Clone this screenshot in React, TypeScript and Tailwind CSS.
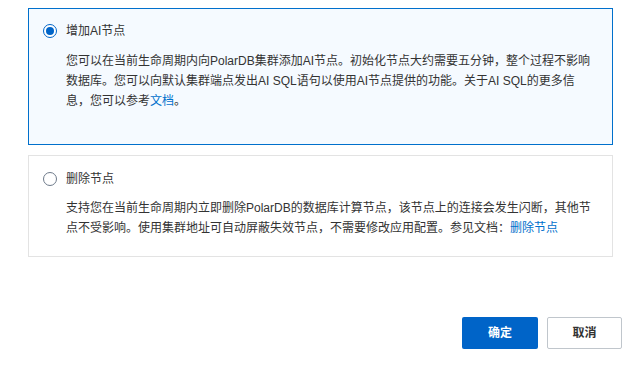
import React from "react";

const font = { fontFamily: '"Liberation Sans", "Noto Sans CJK SC", sans-serif' };

function Radio({ checked }: { checked: boolean }) {
  return checked ? (
    <span className="flex h-[14px] w-[14px] shrink-0 items-center justify-center rounded-full border border-[#0064c8] bg-white">
      <span className="h-[8px] w-[8px] rounded-full bg-[#0064c8]" />
    </span>
  ) : (
    <span className="h-[14px] w-[14px] shrink-0 rounded-full border border-[#6e7a8a] bg-white" />
  );
}

export default function App() {
  return (
    <div className="min-h-[371px] w-[643px] bg-white pt-2 pl-7 text-[12px] text-[#333]" style={font}>
      <div className="flex w-[585px] flex-col gap-[10px]">
        <div className="border border-[#0070cc] bg-[#f5faff] pt-3 pb-[33px] pl-[14px]">
          <div className="flex h-5 items-center gap-[9px]">
            <Radio checked />
            <span className="leading-5">增加AI节点</span>
          </div>
          <div className="mt-[10px] ml-[23px] leading-5">
            <div className="whitespace-nowrap">您可以在当前生命周期内向PolarDB集群添加AI节点。初始化节点大约需要五分钟，整个过程不影响</div>
            <div className="whitespace-nowrap">数据库。您可以向默认集群端点发出AI SQL语句以使用AI节点提供的功能。关于AI SQL的更多信</div>
            <div className="whitespace-nowrap">
              息，您可以参考<a className="text-[#0070cc]">文档</a>。
            </div>
          </div>
        </div>
        <div className="border border-[#e3e3e3] bg-white pt-[13px] pb-[18px] pl-[14px]">
          <div className="flex h-5 items-center gap-[9px]">
            <Radio checked={false} />
            <span className="leading-5">删除节点</span>
          </div>
          <div className="mt-[9px] ml-[23px] leading-5">
            <div className="whitespace-nowrap">支持您在当前生命周期内立即删除PolarDB的数据库计算节点，该节点上的连接会发生闪断，其他节</div>
            <div className="whitespace-nowrap">
              点不受影响。使用集群地址可自动屏蔽失效节点，不需要修改应用配置。参见文档：
              <a className="text-[#0070cc]">删除节点</a>
            </div>
          </div>
        </div>
      </div>
      <div className="mt-[60px] flex w-[594px] justify-end gap-[9px]">
        <button className="h-[32px] w-[76px] rounded-[2px] bg-[#0064c8] text-[12px] font-bold text-white">确定</button>
        <button className="h-[32px] w-[75px] rounded-[2px] border border-[#c0c6cc] bg-white text-[12px] font-bold text-[#333]">取消</button>
      </div>
    </div>
  );
}
